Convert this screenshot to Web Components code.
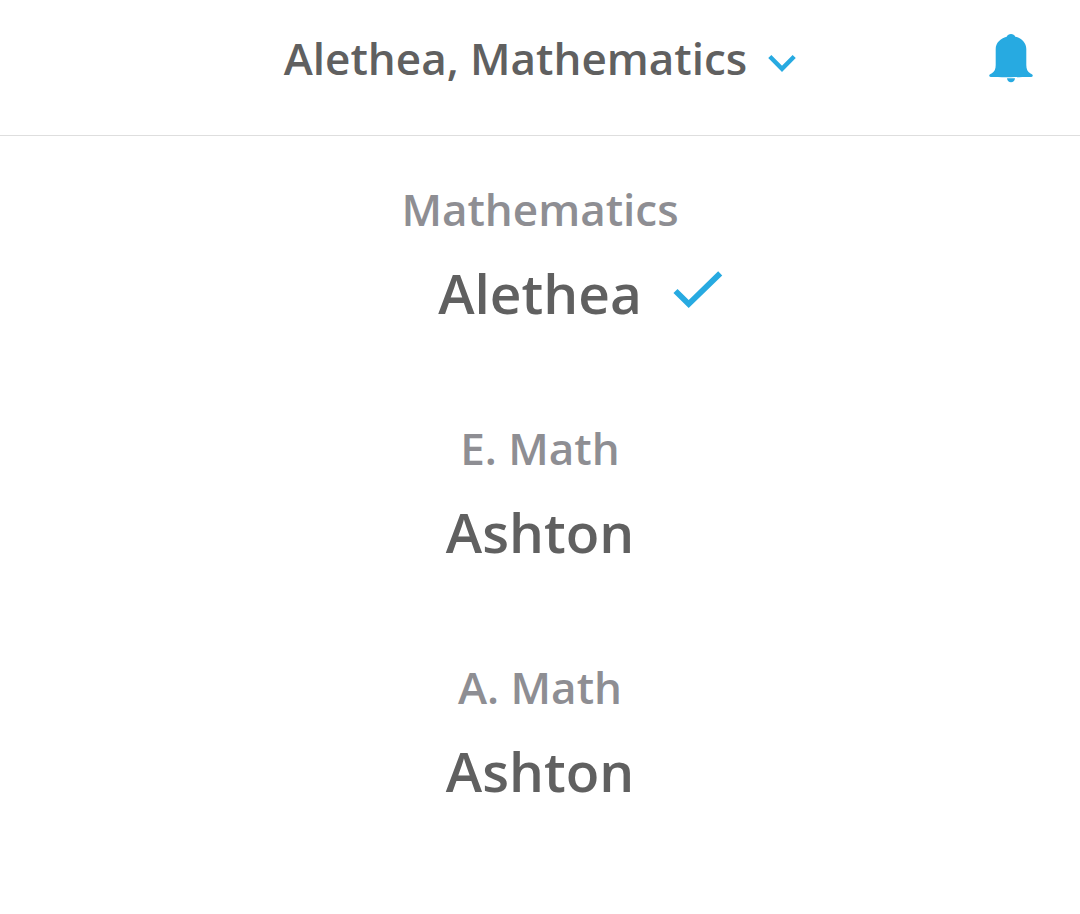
<!DOCTYPE html>
<html lang="en">
<head>
<meta charset="utf-8">
<meta name="viewport" content="width=device-width, initial-scale=1">
<title>Classes</title>
<style>
  body {
    margin: 0;
    min-height: 100vh;
    background: #fff;
    color: #606060;
    font-family: "Open Sans", "Noto Sans", sans-serif;
    font-weight: 600;
    --accent: #27aae1;
    --muted: #8e8e93;
    --line: #dedede;
  }
</style>
</head>
<body>
<app-header>Alethea, Mathematics</app-header>
<class-list>
  <class-option subject="Mathematics" selected>Alethea</class-option>
  <class-option subject="E. Math">Ashton</class-option>
  <class-option subject="A. Math">Ashton</class-option>
</class-list>

<script>
  class AppHeader extends HTMLElement {
    constructor() {
      super();
      this.attachShadow({ mode: "open" }).innerHTML = `
        <style>
          :host { display: block; border-bottom: 1px solid var(--line); }
          header {
            display: grid;
            grid-template-columns: 1fr auto 1fr;
            align-items: start;
            padding: 28px 47px 47px;
          }
          button {
            margin: 0; padding: 0; border: 0; background: none;
            color: inherit; font: inherit; cursor: pointer;
          }
          svg { display: block; }
          .title {
            grid-column: 2;
            display: flex; align-items: center; gap: 21px;
            font-size: 44px; line-height: 60px; white-space: nowrap;
          }
          .title svg { margin-top: 10px; }
          .alerts { justify-self: end; padding-top: 6px; }
        </style>
        <header>
          <button class="title" aria-haspopup="listbox" aria-expanded="true">
            <slot></slot>
            <svg width="28" height="18" viewBox="0 0 28 18" aria-hidden="true">
              <path d="M1.800 2.500 14 14.800 26.200 2.500" fill="none" stroke="var(--accent)" stroke-width="4.400"/>
            </svg>
          </button>
          <button class="alerts" aria-label="Notifications">
            <svg width="44" height="49" viewBox="0 0 44 49" fill="var(--accent)" aria-hidden="true">
              <path d="M22 0C24 0 25.500 1 26.300 2.700C32.500 4 37.300 9 37.300 15V31C37.300 35 38.500 38 41.500 39.500C43.200 40.300 44 41 43.700 42.100Q43.400 43 42 43C37 42.800 30 43.200 22 43.200S7 42.800 2 43Q.6 43 .3 42.100C0 41 .8 40.300 2.500 39.500C5.500 38 6.700 35 6.700 31V15C6.700 9 11.500 4 17.700 2.700C18.500 1 20 0 22 0Z"/>
              <path d="M18 44.200H26C25.700 46.600 24.200 48.200 22 48.200S18.300 46.600 18 44.200Z"/>
            </svg>
          </button>
        </header>`;
    }
  }

  class ClassList extends HTMLElement {
    constructor() {
      super();
      this.attachShadow({ mode: "open" }).innerHTML = `
        <style>
          :host { display: block; }
          main { display: grid; gap: 87px; padding: 43px 24px; }
        </style>
        <main><slot></slot></main>`;
    }
  }

  class ClassOption extends HTMLElement {
    connectedCallback() {
      if (this.shadowRoot) return;
      this.attachShadow({ mode: "open" }).innerHTML = `
        <style>
          :host { display: block; }
          button {
            display: grid; gap: 16px; width: 100%;
            margin: 0; padding: 0; border: 0; background: none;
            color: inherit; font: inherit; text-align: center; cursor: pointer;
          }
          .subject { color: var(--muted); font-size: 44px; line-height: 60px; }
          .row {
            display: grid; grid-template-columns: 1fr auto 1fr;
            align-items: center; column-gap: 31px;
            font-size: 55px; line-height: 76px;
          }
          .name { grid-column: 2; }
          svg { display: none; margin-bottom: 6px; }
          :host([selected]) svg { display: block; }
        </style>
        <button>
          <span class="subject"></span>
          <span class="row">
            <span class="name"><slot></slot></span>
            <svg width="50" height="38" viewBox="0 0 50 38" aria-hidden="true">
              <path d="M2.500 20 15.700 33 47.200 2.300" fill="none" stroke="var(--accent)" stroke-width="5.800"/>
            </svg>
          </span>
        </button>`;
      this.shadowRoot.querySelector(".subject").textContent = this.getAttribute("subject");
      this.shadowRoot.querySelector("button").setAttribute("aria-pressed", this.hasAttribute("selected"));
    }
  }

  customElements.define("app-header", AppHeader);
  customElements.define("class-list", ClassList);
  customElements.define("class-option", ClassOption);
</script>
</body>
</html>
